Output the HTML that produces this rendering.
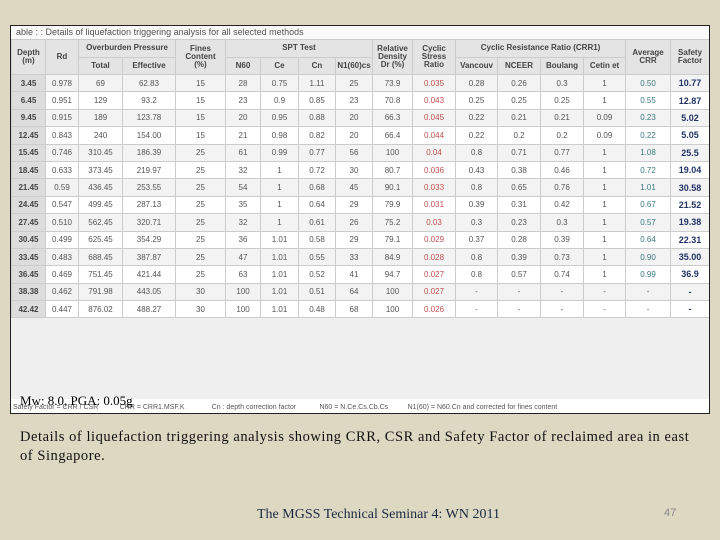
<!DOCTYPE html><html><head><style>
body{margin:0;width:720px;height:540px;background:#ddd8c2;position:relative;overflow:hidden;font-family:"Liberation Sans",sans-serif}
#img{position:absolute;left:10px;top:25px;width:698px;height:387px;border:1px solid #222;background:#efefef;overflow:hidden}
#title{position:absolute;left:0;top:0;width:698px;height:13px;background:#fafafa;font-size:9px;color:#555;line-height:13px;padding-left:5px}
table{position:absolute;left:0;top:13px;border-collapse:collapse;table-layout:fixed;width:698px;font-size:8px;color:#555}
td,th{border:1px solid #ccc;text-align:center;padding:0;overflow:hidden;white-space:nowrap}
th{background:#e4e4e4;color:#444;font-size:8px;font-weight:bold;height:16.5px;line-height:8px}
tr.r td{height:16.4px}
tr.r:nth-child(odd) td{background:#f3f3f3}
tr.r:nth-child(even) td{background:#fff}
td.d{font-weight:bold;color:#444;background:#ddd!important}
td.c{color:#c05050}td.a{color:#3a7a80}td.s{font-weight:bold;color:#223366;font-size:9px}
#foot{position:absolute;left:0;top:373px;width:698px;height:14px;background:#fff;font-size:7px;color:#555;line-height:17px;white-space:nowrap}
#mw{position:absolute;left:9px;top:367px;font-family:"Liberation Serif",serif;font-size:13px;color:#000}
.cap{position:absolute;left:20px;top:428px;font-family:"Liberation Serif",serif;font-size:14.5px;letter-spacing:0.55px;color:#111;line-height:19px;width:690px}
</style></head><body>
<div id="img">
<div id="title">able : : Details of liquefaction triggering analysis for all selected methods</div>
<table>
<colgroup><col style="width:34px"><col style="width:33px"><col style="width:44px"><col style="width:53px"><col style="width:50px"><col style="width:35px"><col style="width:38px"><col style="width:37px"><col style="width:37px"><col style="width:40px"><col style="width:43px"><col style="width:42px"><col style="width:43px"><col style="width:43px"><col style="width:42px"><col style="width:45px"><col style="width:39px"></colgroup>
<tr><th rowspan="2">Depth<br>(m)</th><th rowspan="2">Rd</th><th colspan="2">Overburden Pressure</th><th rowspan="2">Fines<br>Content<br>(%)</th><th colspan="4">SPT Test</th><th rowspan="2">Relative<br>Density<br>Dr (%)</th><th rowspan="2">Cyclic<br>Stress<br>Ratio</th><th colspan="4">Cyclic Resistance Ratio (CRR1)</th><th rowspan="2">Average<br>CRR</th><th rowspan="2">Safety<br>Factor</th></tr>
<tr><th>Total</th><th>Effective</th><th>N60</th><th>Ce</th><th>Cn</th><th>N1(60)cs</th><th>Vancouv</th><th>NCEER</th><th>Boulang</th><th>Cetin et</th></tr>
<tr class="r"><td class="d">3.45</td><td>0.978</td><td>69</td><td>62.83</td><td>15</td><td>28</td><td>0.75</td><td>1.11</td><td>25</td><td>73.9</td><td class="c">0.035</td><td>0.28</td><td>0.26</td><td>0.3</td><td>1</td><td class="a">0.50</td><td class="s">10.77</td></tr>
<tr class="r"><td class="d">6.45</td><td>0.951</td><td>129</td><td>93.2</td><td>15</td><td>23</td><td>0.9</td><td>0.85</td><td>23</td><td>70.8</td><td class="c">0.043</td><td>0.25</td><td>0.25</td><td>0.25</td><td>1</td><td class="a">0.55</td><td class="s">12.87</td></tr>
<tr class="r"><td class="d">9.45</td><td>0.915</td><td>189</td><td>123.78</td><td>15</td><td>20</td><td>0.95</td><td>0.88</td><td>20</td><td>66.3</td><td class="c">0.045</td><td>0.22</td><td>0.21</td><td>0.21</td><td>0.09</td><td class="a">0.23</td><td class="s">5.02</td></tr>
<tr class="r"><td class="d">12.45</td><td>0.843</td><td>240</td><td>154.00</td><td>15</td><td>21</td><td>0.98</td><td>0.82</td><td>20</td><td>66.4</td><td class="c">0.044</td><td>0.22</td><td>0.2</td><td>0.2</td><td>0.09</td><td class="a">0.22</td><td class="s">5.05</td></tr>
<tr class="r"><td class="d">15.45</td><td>0.746</td><td>310.45</td><td>186.39</td><td>25</td><td>61</td><td>0.99</td><td>0.77</td><td>56</td><td>100</td><td class="c">0.04</td><td>0.8</td><td>0.71</td><td>0.77</td><td>1</td><td class="a">1.08</td><td class="s">25.5</td></tr>
<tr class="r"><td class="d">18.45</td><td>0.633</td><td>373.45</td><td>219.97</td><td>25</td><td>32</td><td>1</td><td>0.72</td><td>30</td><td>80.7</td><td class="c">0.036</td><td>0.43</td><td>0.38</td><td>0.46</td><td>1</td><td class="a">0.72</td><td class="s">19.04</td></tr>
<tr class="r"><td class="d">21.45</td><td>0.59</td><td>436.45</td><td>253.55</td><td>25</td><td>54</td><td>1</td><td>0.68</td><td>45</td><td>90.1</td><td class="c">0.033</td><td>0.8</td><td>0.65</td><td>0.76</td><td>1</td><td class="a">1.01</td><td class="s">30.58</td></tr>
<tr class="r"><td class="d">24.45</td><td>0.547</td><td>499.45</td><td>287.13</td><td>25</td><td>35</td><td>1</td><td>0.64</td><td>29</td><td>79.9</td><td class="c">0.031</td><td>0.39</td><td>0.31</td><td>0.42</td><td>1</td><td class="a">0.67</td><td class="s">21.52</td></tr>
<tr class="r"><td class="d">27.45</td><td>0.510</td><td>562.45</td><td>320.71</td><td>25</td><td>32</td><td>1</td><td>0.61</td><td>26</td><td>75.2</td><td class="c">0.03</td><td>0.3</td><td>0.23</td><td>0.3</td><td>1</td><td class="a">0.57</td><td class="s">19.38</td></tr>
<tr class="r"><td class="d">30.45</td><td>0.499</td><td>625.45</td><td>354.29</td><td>25</td><td>36</td><td>1.01</td><td>0.58</td><td>29</td><td>79.1</td><td class="c">0.029</td><td>0.37</td><td>0.28</td><td>0.39</td><td>1</td><td class="a">0.64</td><td class="s">22.31</td></tr>
<tr class="r"><td class="d">33.45</td><td>0.483</td><td>688.45</td><td>387.87</td><td>25</td><td>47</td><td>1.01</td><td>0.55</td><td>33</td><td>84.9</td><td class="c">0.028</td><td>0.8</td><td>0.39</td><td>0.73</td><td>1</td><td class="a">0.90</td><td class="s">35.00</td></tr>
<tr class="r"><td class="d">36.45</td><td>0.469</td><td>751.45</td><td>421.44</td><td>25</td><td>63</td><td>1.01</td><td>0.52</td><td>41</td><td>94.7</td><td class="c">0.027</td><td>0.8</td><td>0.57</td><td>0.74</td><td>1</td><td class="a">0.99</td><td class="s">36.9</td></tr>
<tr class="r"><td class="d">38.38</td><td>0.462</td><td>791.98</td><td>443.05</td><td>30</td><td>100</td><td>1.01</td><td>0.51</td><td>64</td><td>100</td><td class="c">0.027</td><td>-</td><td>-</td><td>-</td><td>-</td><td>-</td><td class="s">-</td></tr>
<tr class="r"><td class="d">42.42</td><td>0.447</td><td>876.02</td><td>488.27</td><td>30</td><td>100</td><td>1.01</td><td>0.48</td><td>68</td><td>100</td><td class="c">0.026</td><td>-</td><td>-</td><td>-</td><td>-</td><td>-</td><td class="s">-</td></tr>
</table>
<div id="foot">&nbsp;Safety Factor = CRR / CSR &nbsp;&nbsp;&nbsp;&nbsp;&nbsp;&nbsp;&nbsp;&nbsp;&nbsp; CRR = CRR1.MSF.K &nbsp;&nbsp;&nbsp;&nbsp;&nbsp;&nbsp;&nbsp;&nbsp;&nbsp;&nbsp;&nbsp;&nbsp; Cn : depth correction factor &nbsp;&nbsp;&nbsp;&nbsp;&nbsp;&nbsp;&nbsp;&nbsp;&nbsp;&nbsp; N60 = N.Ce.Cs.Cb.Cs &nbsp;&nbsp;&nbsp;&nbsp;&nbsp;&nbsp;&nbsp;&nbsp; N1(60) = N60.Cn and corrected for fines content</div>
<div id="mw">Mw: 8.0, PGA: 0.05g</div>
</div>
<div class="cap">Details of liquefaction triggering analysis showing CRR, CSR and Safety Factor of reclaimed area in east<br>of Singapore.</div>
<div style="position:absolute;left:257px;top:507px;font-family:'Liberation Serif',serif;font-size:14px;color:#1a2a40">The MGSS Technical Seminar 4: WN 2011</div>
<div style="position:absolute;left:664px;top:507px;font-size:11px;color:#888">47</div>
</body></html>
